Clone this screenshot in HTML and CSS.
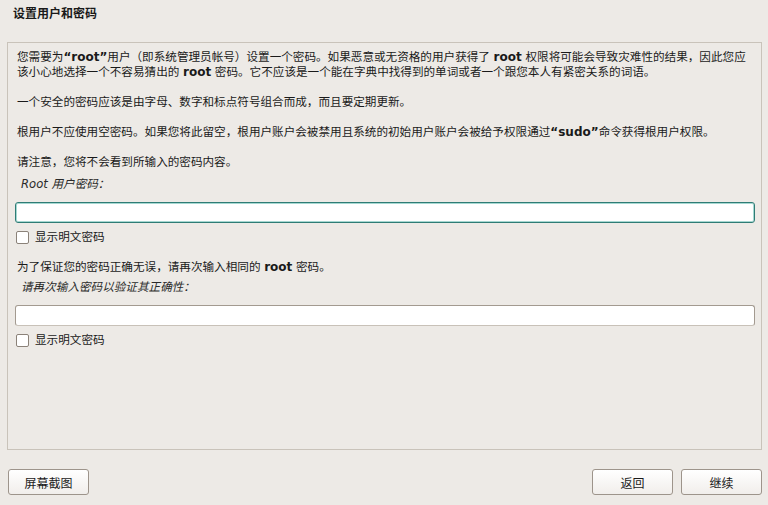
FILE: index.html
```html
<!DOCTYPE html>
<html>
<head>
  <meta charset="utf-8">
  <title>设置用户和密码</title>
  <link rel="stylesheet" href="styles.css">
</head>
<body>

<h1 class="page-title">设置用户和密码</h1>

<div class="panel">
  <p class="note">您需要为<b>“root”</b>用户（即系统管理员帐号）设置一个密码。如果恶意或无资格的用户获得了 <b>root</b> 权限将可能会导致灾难性的结果，因此您应该小心地选择一个不容易猜出的 <b>root</b> 密码。它不应该是一个能在字典中找得到的单词或者一个跟您本人有紧密关系的词语。</p>
  <p class="note">一个安全的密码应该是由字母、数字和标点符号组合而成，而且要定期更新。</p>
  <p class="note">根用户不应使用空密码。如果您将此留空，根用户账户会被禁用且系统的初始用户账户会被给予权限通过<b>“sudo”</b>命令获得根用户权限。</p>
  <p class="note">请注意，您将不会看到所输入的密码内容。</p>

  <div class="field-label">Root 用户密码：</div>
  <div class="entry focused"></div>
  <label class="check-row"><span class="check-box"></span>显示明文密码</label>

  <p class="note again">为了保证您的密码正确无误，请再次输入相同的 <b>root</b> 密码。</p>
  <div class="field-label">请再次输入密码以验证其正确性：</div>
  <div class="entry"></div>
  <label class="check-row"><span class="check-box"></span>显示明文密码</label>
</div>

<div class="button-bar">
  <button class="btn">屏幕截图</button>
  <div class="nav-buttons">
    <button class="btn">返回</button>
    <button class="btn">继续</button>
  </div>
</div>

</body>
</html>
```

FILE: styles.css
```css
body {
  margin: 0;
  width: 768px;
  height: 505px;
  background-color: #edeae6;
  font-family: "DejaVu Sans", "Noto Sans CJK SC", sans-serif;
  font-size: 12px;
  line-height: 15px;
  color: #1a1a1a;
}
.page-title {
  margin: 0;
  padding: 7px 0 0 13px;
  height: 35px;
  font-size: 12px;
  line-height: 15px;
  font-weight: bold;
}
.panel {
  margin-left: 7px;
  width: 755px;
  height: 408px;
  box-sizing: border-box;
  border: 1px solid #c9c3ba;
  padding: 7px 6px 0 7px;
  font-size: 11.6px;
}
.note {
  margin: 0 0 15px 0;
  padding-left: 2px;
}
.note b {
  font-weight: bold;
  font-size: 12px;
}
.note.again {
  margin-top: 15px;
  margin-bottom: 5px;
}
.field-label {
  font-style: italic;
  padding-left: 6px;
  margin-top: -8px;
  margin-bottom: 10px;
  color: #2a2a2a;
}
.note.again + .field-label {
  margin-top: 0;
}
.entry {
  height: 21px;
  box-sizing: border-box;
  background: #fff;
  border: 1px solid #a39a90;
  border-bottom-color: #c8c1b8;
  border-radius: 3px;
}
.entry.focused {
  border: 1px solid #2f7c75;
  box-shadow: inset 0 0 0 1px #a6d8d2;
}
.check-row {
  display: flex;
  align-items: center;
  height: 15px;
  margin-top: 7px;
  padding-left: 1px;
}
.check-box {
  width: 13px;
  height: 13px;
  box-sizing: border-box;
  border: 1px solid #8b8279;
  border-radius: 2px;
  background: #fff;
  margin-right: 6px;
}
.button-bar {
  display: flex;
  justify-content: space-between;
  padding: 19px 6px 0 8px;
}
.nav-buttons {
  display: flex;
  gap: 8px;
}
.btn {
  width: 81px;
  height: 26px;
  font-family: "DejaVu Sans", "Noto Sans CJK SC", sans-serif;
  font-size: 12px;
  color: #1a1a1a;
  border: 1px solid #9d948b;
  border-radius: 3px;
  background: linear-gradient(#ffffff, #f1eeeb);
  padding: 0;
}
```
